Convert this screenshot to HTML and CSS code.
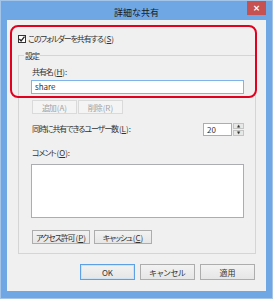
FILE: index.html
```html
<!DOCTYPE html>
<html lang="ja">
<head>
  <meta charset="UTF-8" />
  <title>詳細な共有</title>
  <link rel="stylesheet" href="styles.css">
</head>
<body>
  <div class="window">
    <div class="titlebar">
      <span class="title">詳細な共有</span>
      <span class="close-btn">×</span>
    </div>

    <div class="client">
      <!-- red highlight drawn over the share options -->
      <div class="highlight"></div>

      <div class="check-row">
        <span class="checkbox">
          <svg width="8" height="8" viewBox="0 0 8 8"><path d="M1.4 4 L3.1 5.9 L6.5 1.6" fill="none" stroke="#222" stroke-width="1.3"/></svg>
        </span>
        <span>このフォルダーを共有する<span class="key">(<u>S</u>)</span></span>
      </div>

      <div class="group">
        <div class="group-title">設定</div>

        <div class="label name-label">共有名<span class="key">(<u>H</u>):</span></div>
        <div class="textbox focused">share</div>

        <div class="btn-row small">
          <span class="btn disabled">追加<span class="key">(A)</span></span>
          <span class="btn disabled">削除<span class="key">(R)</span></span>
        </div>

        <div class="users-row">
          <span class="label">同時に共有できるユーザー数<span class="key">(<u>L</u>):</span></span>
          <div class="spinner">
            <span class="spin-value">20</span>
            <span class="spin-btns">
              <span class="spin up">▲</span>
              <span class="spin down">▼</span>
            </span>
          </div>
        </div>

        <div class="label comment-label">コメント<span class="key">(<u>O</u>):</span></div>
        <div class="textarea"></div>

        <div class="btn-row perms">
          <span class="btn wide">アクセス許可<span class="key">(<u>P</u>)</span></span>
          <span class="btn wide">キャッシュ<span class="key">(<u>C</u>)</span></span>
        </div>
      </div>

      <div class="dialog-buttons">
        <span class="btn big default">OK</span>
        <span class="btn big">キャンセル</span>
        <span class="btn big">適用</span>
      </div>
    </div>
  </div>
</body>
</html>
```

FILE: styles.css
```css
body {
  margin: 0;
  font-family: "Noto Sans CJK JP", "Noto Sans", sans-serif;
  font-size: 8px;
  color: #333;
  background: #fff;
}

u {
  text-decoration: underline;
  text-underline-offset: 1px;
}

.key {
  letter-spacing: 0;
  margin-left: 1px;
}

.window {
  width: 273px;
  height: 299px;
  box-sizing: border-box;
  background: #6fa7e5;
  border: 1px solid #a4c4e8;
  padding: 0 6px 7px;
  display: flex;
  flex-direction: column;
}

.titlebar {
  height: 19px;
  position: relative;
  display: flex;
  align-items: center;
  justify-content: center;
}

.title {
  font-size: 9px;
  color: #1a1a1a;
  margin-top: 4px;
}

.close-btn {
  position: absolute;
  top: 0;
  right: 0;
  width: 19px;
  height: 14px;
  background: #c75050;
  color: #fff;
  font-family: "DejaVu Sans", sans-serif;
  font-size: 9px;
  font-weight: bold;
  line-height: 14px;
  text-align: center;
}

.client {
  flex: 1;
  background: #f0f0f0;
  position: relative;
  display: flex;
  flex-direction: column;
  font-feature-settings: "palt";
  letter-spacing: -1.1px;
}

.highlight {
  position: absolute;
  left: 3px;
  top: 5px;
  width: 247px;
  height: 73px;
  box-sizing: border-box;
  border: 2px solid #e3001f;
  border-radius: 8px;
}

.check-row {
  margin: 14px 0 0 11px;
  height: 10px;
  display: flex;
  align-items: center;
  gap: 2px;
  line-height: 10px;
}

.checkbox {
  width: 8px;
  height: 8px;
  box-sizing: border-box;
  border: 1px solid #333;
  background: #fff;
  display: flex;
  align-items: center;
  justify-content: center;
}

.checkbox svg {
  flex: none;
}

.group {
  margin: 11px 10px 0 11px;
  border: 1px solid #d5d5d5;
  padding: 0 11px 9px 12px;
  display: flex;
  flex-direction: column;
}

.group-title {
  align-self: flex-start;
  margin: -5px 0 0 -7px;
  padding: 0 1px;
  height: 10px;
  line-height: 10px;
  background: #f0f0f0;
}

.label {
  line-height: 10px;
  height: 10px;
  padding-left: 1px;
}

.name-label {
  margin-top: 6px;
}

.textbox {
  margin-top: 3px;
  height: 14px;
  box-sizing: border-box;
  border: 1px solid #abadb3;
  background: #fff;
  line-height: 12px;
  padding-left: 3px;
  letter-spacing: 0;
}

.textbox.focused {
  border-color: #7eb4ea;
}

.btn-row {
  display: flex;
  gap: 1px;
}

.btn-row.small {
  margin-top: 6px;
  padding-left: 1px;
}

.btn {
  box-sizing: border-box;
  border: 1px solid #adadad;
  background: linear-gradient(#f2f2f2, #e6e6e6);
  display: flex;
  align-items: center;
  justify-content: center;
}

.btn.disabled {
  width: 45px;
  height: 14px;
  color: #a3a3a3;
  background: #f4f4f4;
  border-color: #dadada;
}

.users-row {
  margin-top: 8px;
  height: 14px;
  display: flex;
  align-items: center;
  justify-content: space-between;
}

.spinner {
  display: flex;
  height: 13px;
  gap: 1px;
  letter-spacing: 0;
}

.spin-value {
  width: 29px;
  box-sizing: border-box;
  border: 1px solid #abadb3;
  background: #fff;
  line-height: 11px;
  padding-left: 3px;
}

.spin-btns {
  width: 11px;
  display: flex;
  flex-direction: column;
  gap: 1px;
}

.spin {
  flex: 1;
  background: #e8e8e8;
  border: 1px solid #c4c4c4;
  font-size: 4px;
  line-height: 4px;
  text-align: center;
  color: #333;
  font-family: "DejaVu Sans", sans-serif;
}

.comment-label {
  margin-top: 12px;
}

.textarea {
  margin-top: 6px;
  height: 54px;
  box-sizing: border-box;
  border: 1px solid #abadb3;
  background: #fff;
}

.btn-row.perms {
  margin-top: 12px;
  gap: 4px;
  padding-left: 1px;
}

.btn.wide {
  width: 58px;
  height: 14px;
}

.dialog-buttons {
  margin: 10px 11px 0 0;
  display: flex;
  justify-content: flex-end;
  gap: 5px;
  letter-spacing: 0;
}

.btn.big {
  width: 55px;
  height: 16px;
}

.btn.default {
  border-color: #5ea0e4;
  box-shadow: inset 0 0 0 1px #cfe3f7;
}
```
